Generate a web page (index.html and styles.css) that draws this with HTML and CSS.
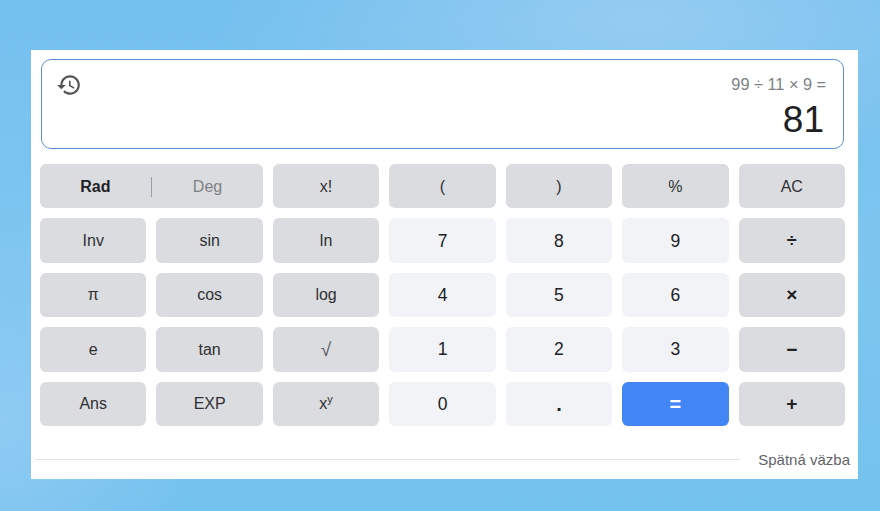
FILE: index.html
```html
<!DOCTYPE html>
<html lang="sk">
<head>
<meta charset="utf-8">
<title>Kalkulačka</title>
<link rel="stylesheet" href="styles.css">
</head>
<body>
<main class="card">
  <section class="display">
    <svg class="history" viewBox="0 0 24 24" aria-hidden="true"><path d="M13 3c-4.97 0-9 4.03-9 9H1l3.89 3.89.07.14L9 12H6c0-3.87 3.13-7 7-7s7 3.13 7 7-3.13 7-7 7c-1.93 0-3.68-.79-4.94-2.06l-1.42 1.42C8.27 19.99 10.51 21 13 21c4.97 0 9-4.03 9-9s-4.03-9-9-9zm-1 5v5l4.28 2.54.72-1.21-3.5-2.08V8H12z"/></svg>
    <div class="readout">
      <div class="expr">99 ÷ 11 × 9 =</div>
      <div class="result">81</div>
    </div>
  </section>
  <section class="keys">
    <div class="key fn wide"><span class="rad">Rad</span><span class="sep"></span><span class="deg">Deg</span></div>
    <div class="key fn">x!</div>
    <div class="key fn">(</div>
    <div class="key fn">)</div>
    <div class="key fn">%</div>
    <div class="key fn">AC</div>
    <div class="key fn">Inv</div>
    <div class="key fn">sin</div>
    <div class="key fn">ln</div>
    <div class="key num">7</div>
    <div class="key num">8</div>
    <div class="key num">9</div>
    <div class="key fn div">÷</div>
    <div class="key fn">π</div>
    <div class="key fn">cos</div>
    <div class="key fn">log</div>
    <div class="key num">4</div>
    <div class="key num">5</div>
    <div class="key num">6</div>
    <div class="key fn op">×</div>
    <div class="key fn">e</div>
    <div class="key fn">tan</div>
    <div class="key fn root">√</div>
    <div class="key num">1</div>
    <div class="key num">2</div>
    <div class="key num">3</div>
    <div class="key fn op">−</div>
    <div class="key fn">Ans</div>
    <div class="key fn">EXP</div>
    <div class="key fn"><span>x<sup>y</sup></span></div>
    <div class="key num">0</div>
    <div class="key num dot">.</div>
    <div class="key equals">=</div>
    <div class="key fn op">+</div>
  </section>
  <footer class="foot">
    <span class="rule"></span>
    <span class="feedback">Spätná väzba</span>
  </footer>
</main>
</body>
</html>
```
FILE: styles.css
```css
* { box-sizing: border-box; }
html, body { height: 100%; }
body {
  margin: 0;
  padding: 50px 22px 32px 31px;
  overflow: hidden;
  font-family: "Liberation Sans", Arial, sans-serif;
  background:
    radial-gradient(ellipse 420px 160px at 640px 20px, #95ccf2 0%, rgba(149,204,242,0) 100%),
    radial-gradient(ellipse 200px 200px at 0px 420px, #8fcbf3 0%, rgba(143,203,243,0) 100%),
    linear-gradient(180deg, #74c0ee 0%, #7ec6f0 50%, #74c2ee 100%);
}
.card {
  width: 827px;
  height: 429px;
  background: #fff;
  padding: 9px 13px 0 9px;
  display: flex;
  flex-direction: column;
}
.display {
  margin-left: 1px;
  width: 803px;
  height: 90px;
  border: 1px solid #5b8fd0;
  border-top-width: 1.5px;
  border-radius: 10px;
  display: flex;
  justify-content: space-between;
  padding: 12px 17px 0 14px;
}
.history { width: 26px; height: 26px; fill: #555; }
.readout { text-align: right; }
.expr { font-size: 16.3px; line-height: 22px; color: #7d8185; margin-top: 1px; }
.result { font-size: 37px; line-height: 42px; color: #202124; margin-top: 4px; padding-right: 2px; }
.keys {
  margin-top: 15px;
  display: grid;
  grid-template-columns: repeat(7, 1fr);
  grid-auto-rows: 44.4px;
  gap: 10px;
  width: 805px;
}
.key {
  border-radius: 6px;
  display: flex;
  align-items: center;
  justify-content: center;
  font-size: 16px;
  color: #2f3033;
  padding-top: 1px;
}
.fn { background: #dbdcdf; }
.num { background: #f2f3f6; font-size: 17.5px; color: #202124; }
.op { font-size: 19px; font-weight: 700; color: #202124; }
.div { font-size: 18px; font-weight: 700; color: #202124; }
.root { font-size: 19px; color: #55585c; }
.dot { font-weight: 700; font-size: 20px; }
.equals { background: #4285f4; color: #fff; font-size: 20px; font-weight: 700; }
.wide { grid-column: span 2; }
.rad { flex: 1; text-align: center; font-weight: 700; color: #202124; }
.deg { flex: 1; text-align: center; color: #7d8185; }
.sep { width: 1.5px; height: 20px; background: #9a9da1; }
sup { font-size: 11px; line-height: 0; vertical-align: 6px; }
.foot {
  margin-top: 25px;
  margin-left: -5px;
  margin-right: -5px;
  display: flex;
  align-items: center;
  gap: 18px;
}
.rule { flex: 1; height: 1px; background: #dfe1e5; }
.feedback { font-size: 15px; color: #5f6368; line-height: 18px; }
```
